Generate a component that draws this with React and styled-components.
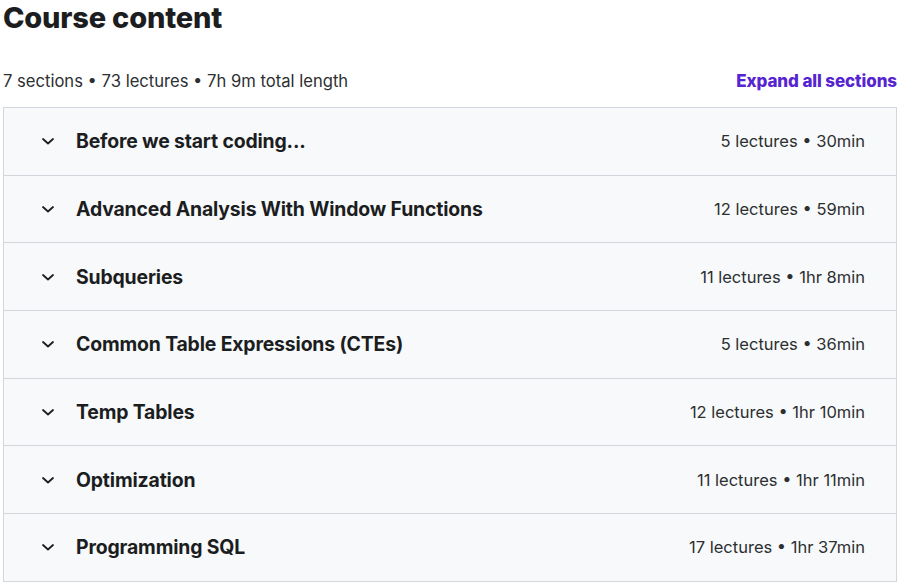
import React from 'react';
import styled, { createGlobalStyle } from 'styled-components';

const GlobalStyle = createGlobalStyle`
  body {
    margin: 0;
    background: #ffffff;
    font-family: Inter, "Liberation Sans", sans-serif;
    color: #2d2f31;
  }
`;

const Page = styled.div`
  padding: 0 3px 0 3px;
  width: 900px;
  box-sizing: border-box;
`;

const Title = styled.h2`
  margin: 0;
  padding-top: 1px;
  font-size: 29px;
  font-weight: 800;
  letter-spacing: -0.2px;
  line-height: 34px;
  color: #1c1d1f;
`;

const SummaryRow = styled.div`
  display: flex;
  justify-content: space-between;
  align-items: center;
  margin-top: 29px;
  height: 34px;
`;

const Summary = styled.span`
  font-size: 16.6px;
  color: #2d2f31;
`;

const ExpandLink = styled.button`
  border: none;
  background: none;
  padding: 0;
  font-family: inherit;
  font-size: 17px;
  font-weight: 800;
  letter-spacing: -0.1px;
  color: #5624d0;
  cursor: pointer;
`;

const Sections = styled.div`
  margin-top: 9px;
  border: 1px solid #d1d7dc;
  border-bottom: none;
`;

const SectionRow = styled.div`
  display: flex;
  align-items: center;
  height: 66.7px;
  padding: 0 31px 0 36px;
  background: #f7f9fa;
  border-bottom: 1px solid #d1d7dc;
`;

const Chevron = styled.svg`
  width: 16px;
  height: 16px;
  flex-shrink: 0;
  margin-right: 20px;
`;

const SectionTitle = styled.span`
  flex: 1;
  font-size: 19.4px;
  font-weight: 750;
  letter-spacing: -0.15px;
  color: #1c1d1f;
`;

const SectionStats = styled.span`
  font-size: 16.5px;
  color: #2d2f31;
`;

const sections = [
  { title: 'Before we start coding...', stats: '5 lectures • 30min' },
  { title: 'Advanced Analysis With Window Functions', stats: '12 lectures • 59min' },
  { title: 'Subqueries', stats: '11 lectures • 1hr 8min' },
  { title: 'Common Table Expressions (CTEs)', stats: '5 lectures • 36min' },
  { title: 'Temp Tables', stats: '12 lectures • 1hr 10min' },
  { title: 'Optimization', stats: '11 lectures • 1hr 11min' },
  { title: 'Programming SQL', stats: '17 lectures • 1hr 37min' },
];

const App = () => (
  <Page>
    <GlobalStyle />
    <Title>Course content</Title>
    <SummaryRow>
      <Summary>7 sections • 73 lectures • 7h 9m total length</Summary>
      <ExpandLink>Expand all sections</ExpandLink>
    </SummaryRow>
    <Sections>
      {sections.map((s) => (
        <SectionRow key={s.title}>
          <Chevron viewBox="0 0 16 16" fill="none">
            <path d="M3 6l5 4.5L13 6" stroke="#1c1d1f" strokeWidth="1.8" strokeLinecap="round" strokeLinejoin="round" />
          </Chevron>
          <SectionTitle>{s.title}</SectionTitle>
          <SectionStats>{s.stats}</SectionStats>
        </SectionRow>
      ))}
    </Sections>
  </Page>
);

export default App;
